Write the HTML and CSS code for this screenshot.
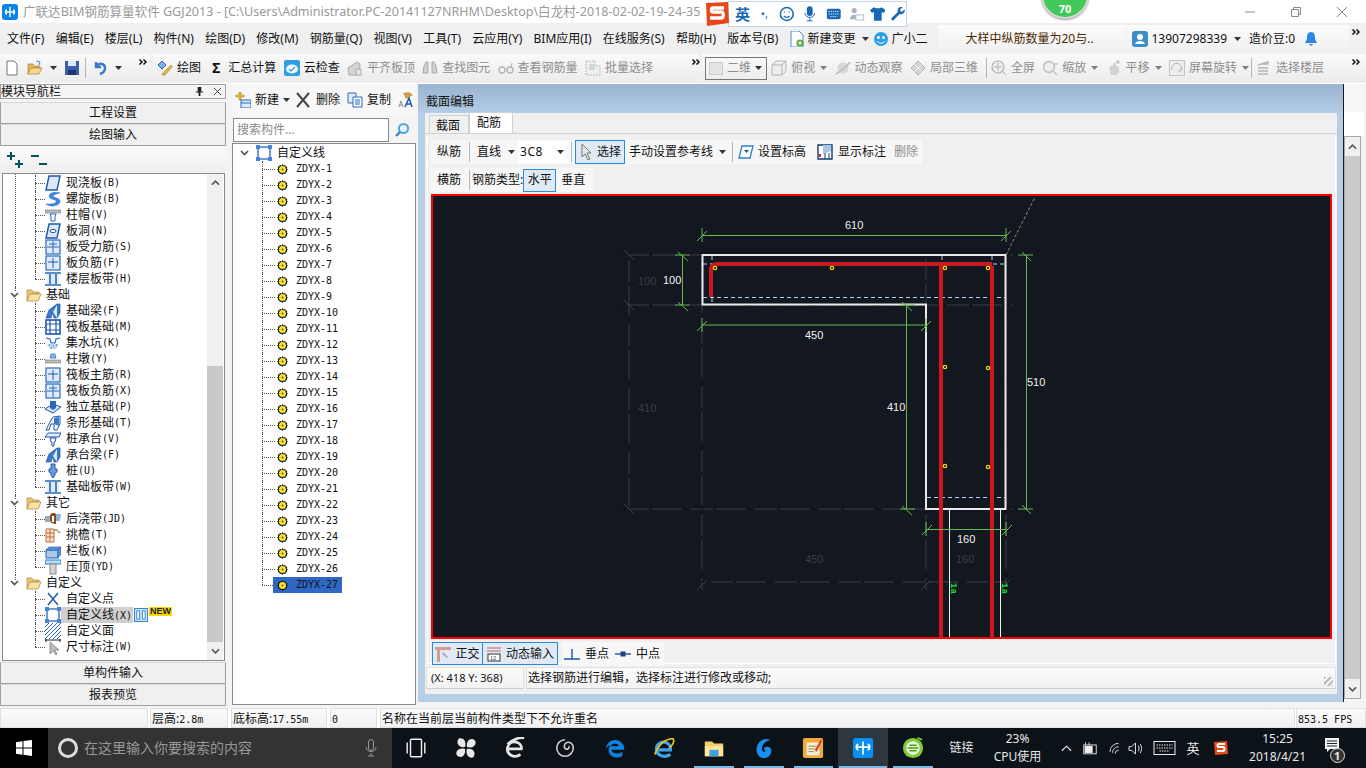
FILE: index.html
```html
<!DOCTYPE html>
<html lang="zh-CN">

<head>
    <meta charset="UTF-8">
    <title>广联达BIM钢筋算量软件 GGJ2013</title>
    <link rel="stylesheet" href="styles.css">
</head>

<body>

    <!-- icon sprite -->
    <svg class="sprite" width="0" height="0">
        <defs>
            <symbol id="i-folder" viewBox="0 0 16 16"><path d="M1 3h5l1 2h6v2H5l-3 7H1z" fill="#e9c877" stroke="#a98a3c" stroke-width=".7"/><path d="M4 7h11l-3 7H1z" fill="#f7e3a3" stroke="#a98a3c" stroke-width=".7"/></symbol>
            <symbol id="i-slab" viewBox="0 0 16 16"><path d="M4 1h11l-3 14H1z" fill="#dbe9f8" stroke="#1f56ad" stroke-width="1.4"/></symbol>
            <symbol id="i-spiral" viewBox="0 0 16 16"><path d="M15 2C8 0 2 3 5 7c2 2 7 1 6 4-1 2-6 2-10 2 4 3 12 3 14-2 1-4-6-4-7-6 0-1 3-2 7-3z" fill="#3f86dc" stroke="#2e6fc4" stroke-width=".5"/></symbol>
            <symbol id="i-cap" viewBox="0 0 16 16"><path d="M0 3h16v3H0z" fill="#b9b9b9" stroke="#777" stroke-width=".6"/><path d="M5 7h6l-1 3v4H6v-4z" fill="#fff" stroke="#2a68bd"/></symbol>
            <symbol id="i-hole" viewBox="0 0 16 16"><path d="M4 1h11l-3 14H1z" fill="#dbe9f8" stroke="#1f56ad" stroke-width="1.4"/><ellipse cx="8" cy="8" rx="3" ry="1.6" fill="#fff" stroke="#1f56ad"/></symbol>
            <symbol id="i-grid" viewBox="0 0 16 16"><rect x="1" y="1" width="14" height="14" fill="#dfeafa" stroke="#2a68bd" stroke-width="1.2"/><path d="M8 2v12M2 8h12M4 5h8" stroke="#2a68bd" fill="none"/></symbol>
            <symbol id="i-band" viewBox="0 0 16 16"><path d="M2 3h12v10H2z" fill="#cfe0f5" opacity=".6"/><path d="M0 2h16M0 14h16" stroke="#2a68bd" stroke-width="1.4"/><path d="M5 3v10M11 3v10" stroke="#2a68bd" stroke-width="1.6"/></symbol>
            <symbol id="i-beam" viewBox="0 0 16 16"><path d="M1 15l3-8 8-6h3v9l-3 5H9l-1-6-2 6z" fill="#3a78c9" stroke="#1f56ad" stroke-width=".7"/><path d="M8 9l4-7v13z" fill="#dfeafa"/></symbol>
            <symbol id="i-raft" viewBox="0 0 16 16"><rect x="1" y="1" width="14" height="14" fill="#fff" stroke="#1f56ad" stroke-width="1.6"/><path d="M5 1v14M11 1v14M1 5h14M1 11h14" stroke="#1f56ad" stroke-width="1.2"/></symbol>
            <symbol id="i-pit" viewBox="0 0 16 16"><path d="M1 3l4 1 1 4h4l1-4 4-1" fill="none" stroke="#2a68bd" stroke-width="1.2"/><path d="M2 9l3 5h6l3-5z" fill="#bcd4f0"/><path d="M4 10h1M8 11h1M11 10h1M6 13h1" stroke="#2a68bd"/></symbol>
            <symbol id="i-pier" viewBox="0 0 16 16"><path d="M6 3h4l1 4H5z" fill="#8fb4e4" stroke="#2a68bd" stroke-width=".7"/><path d="M0 9h16v3H0z" fill="#bdbdbd" stroke="#777" stroke-width=".6"/></symbol>
            <symbol id="i-main" viewBox="0 0 16 16"><rect x="1" y="1" width="14" height="14" fill="#dfeafa" stroke="#2a68bd" stroke-width="1.2"/><path d="M8 3v10M3 7h10" stroke="#1f56ad"/></symbol>
            <symbol id="i-iso" viewBox="0 0 16 16"><path d="M0 10l8-5 8 3-8 6z" fill="#d9e6f7" stroke="#1f56ad"/><path d="M5 2h6v7l-3 2-3-2z" fill="#2a68bd"/></symbol>
            <symbol id="i-strip" viewBox="0 0 16 16"><path d="M1 15l3-6 4-7 7-1v8l-3 6H9V9H6l-2 6z" fill="#fff" stroke="#1f56ad"/><path d="M9 3l5-1v9l-5-2z" fill="#3a78c9"/></symbol>
            <symbol id="i-cushion" viewBox="0 0 16 16"><path d="M0 6l3-4h13l-2 4z" fill="#dfeafa" stroke="#1f56ad"/><path d="M5 7h6l-1 4H9v4H7v-4H6z" fill="#fff" stroke="#1f56ad"/></symbol>
            <symbol id="i-pile" viewBox="0 0 16 16"><path d="M6 1h4v5h2v3l-2 1v2l-2 3-2-3v-2L4 9V6h2z" fill="#6d9bdb" stroke="#1f56ad"/></symbol>
            <symbol id="i-post" viewBox="0 0 16 16"><rect x="0" y="5" width="5" height="6" fill="#9ab"/><path d="M5 4c2-3 5-2 6-1v10c-3 0-5-1-6-3z" fill="#8a4a22"/><path d="M11 3h5l-1 7h-4z" fill="#8fb4e4"/><path d="M7 5h2v6H7z" fill="#fff"/></symbol>
            <symbol id="i-eave" viewBox="0 0 16 16"><path d="M1 2h8v13H1z" fill="#fbe4cd" stroke="#c06a33"/><path d="M1 6h8M1 10h8M5 2v13" stroke="#c06a33"/><path d="M9 2h3l4 4h-3l-1-2H9z" fill="#b8a88e"/></symbol>
            <symbol id="i-rail" viewBox="0 0 16 16"><path d="M1 7h12v8H1z" fill="#a9c9ec" stroke="#1f56ad"/><path d="M1 7l3-3h12l-3 3zM13 7l3-3v7l-3 4z" fill="#5e93d8" stroke="#1f56ad" stroke-width=".6"/></symbol>
            <symbol id="i-coping" viewBox="0 0 16 16"><rect x="0" y="1" width="16" height="4" fill="#bcdcf8" stroke="#2a7fd0"/><rect x="5" y="5" width="6" height="10" fill="#d4d4d4" stroke="#888"/></symbol>
            <symbol id="i-point" viewBox="0 0 16 16"><path d="M3 2l10 12M13 2L3 14" stroke="#1f56ad" stroke-width="1.4"/></symbol>
            <symbol id="i-line" viewBox="0 0 16 16"><rect x="2" y="2" width="12" height="12" fill="none" stroke="#1f56ad" stroke-width="1.2"/><path d="M0 0h4v4H0zM12 0h4v4h-4zM0 12h4v4H0zM12 12h4v4h-4z" fill="#3f86dc"/></symbol>
            <symbol id="i-hatch" viewBox="0 0 16 16"><path d="M0 4l4-4M0 8l8-8M0 12L12 0M0 16L16 0M4 16L16 4M8 16l8-8M12 16l4-4" stroke="#2a68bd"/></symbol>
            <symbol id="i-dim" viewBox="0 0 16 16"><path d="M0 1h16M1 0v3M15 0v3" stroke="#222"/><path d="M5 3v12l3-3 3 4 1-1-2-4h4z" fill="#bbb" stroke="#777" stroke-width=".7"/></symbol>
            <symbol id="i-gear" viewBox="0 0 12 12"><path d="M6 0l1 1.5L9 1l.5 1.7 1.7.5-.5 2L12 6l-1.3 1 .5 1.8-1.7.5L9 11l-2-.5L6 12l-1-1.5L3 11l-.5-1.7-1.7-.5.5-1.800L0 6l1.300-1-.5-2 1.700-.5L3 1l2 .5z" fill="#1a1a1a"/><circle cx="6" cy="6" r="3.800" fill="#f6e32a"/><circle cx="6" cy="6" r="1" fill="#5a5200"/></symbol>
            <symbol id="i-caret" viewBox="0 0 7 4"><path d="M0 0h7L3.500 4z" fill="#333"/></symbol>
            <symbol id="i-chev" viewBox="0 0 8 6"><path d="M.5 .5L3 3 .5 5.500M4.500 .5L7 3 4.500 5.500" fill="none" stroke="#111" stroke-width="1.500"/></symbol>
            <symbol id="i-fold" viewBox="0 0 9 6"><path d="M1 1l3.500 3.500L8 1" fill="none" stroke="#555" stroke-width="1.700"/></symbol>
        </defs>
    </svg>

    <!-- title bar -->
    <div class="titlebar">
        <svg class="app-logo" viewBox="0 0 16 16"><rect width="16" height="16" rx="3" fill="#0d83e8"/><path d="M8 3v10M8 8H3M8 8h5M5 6c-2 0-2 4 0 4M11 6c2 0 2 4 0 4" stroke="#fff" stroke-width="1.400" fill="none"/></svg>
        <span class="title-text">广联达BIM钢筋算量软件 GGJ2013 - [C:\Users\Administrator.PC-20141127NRHM\Desktop\白龙村-2018-02-02-19-24-35</span>
        <div class="win-btns">
            <svg viewBox="0 0 10 10"><path d="M0 5h10" stroke="#888"/></svg>
            <svg viewBox="0 0 10 10"><path d="M.5 2.500h7v7h-7zM2.500 2.500v-2h7v7h-2" fill="none" stroke="#888"/></svg>
            <svg viewBox="0 0 10 10"><path d="M0 0l10 10M10 0L0 10" stroke="#888"/></svg>
        </div>
    </div>

    <!-- sogou bar, sits over the title -->
    <div class="ime">
        <svg class="ime-s" viewBox="0 0 28 28"><path d="M3 3l22-1 1 21-22 3z" fill="#e8471a"/><path d="M21 8H10c-2 0-2 4 0 4h8c3 0 3 6 0 6H7" fill="none" stroke="#fff" stroke-width="3.400"/></svg>
        <div class="ime-box">
            <b>英</b>
            <span class="ime-dot">•,</span>
            <svg viewBox="0 0 16 16"><circle cx="8" cy="8" r="6.600" fill="none" stroke="#1769b8" stroke-width="1.600"/><path d="M5 6h1M10 6h1M5 10c2 2 4 2 6 0" stroke="#1769b8" stroke-width="1.300" fill="none"/></svg>
            <svg viewBox="0 0 16 16"><rect x="5" y="0" width="6" height="10" rx="3" fill="#1769b8"/><path d="M3 7c0 6 10 6 10 0M8 12v3M5 15h6" stroke="#1769b8" fill="none"/></svg>
            <svg viewBox="0 0 18 16"><rect x="1" y="2" width="16" height="12" rx="2" fill="#1769b8"/><path d="M3 5h12M3 8h12M5 11h8" stroke="#fff" stroke-dasharray="1.500 1"/></svg>
            <svg viewBox="0 0 18 16"><circle cx="6" cy="4" r="3" fill="#a9b6c4"/><path d="M1 14c0-7 10-7 10 0z" fill="#a9b6c4"/><rect x="8" y="9" width="9" height="6" fill="#fff" stroke="#a9b6c4"/></svg>
            <svg class="ime-shirt" viewBox="0 0 16 16"><path d="M4 1L0 4l2 3 2-1v9h8V6l2 1 2-3-4-3-2 1H6z" fill="#1769b8"/></svg>
            <svg class="ime-wrench" viewBox="0 0 16 16"><path d="M15 3l-3 3-2-2 3-3c-3-1-6 1-5 5L1 13l2 2 7-7c3 1 6-2 5-5z" fill="#1769b8"/></svg>
        </div>
    </div>

    <!-- green score ball -->
    <div class="score"><span>70</span></div>

    <!-- menu -->
    <div class="menubar">
        <span class="menu-item">文件(F)</span>
        <span class="menu-item">编辑(E)</span>
        <span class="menu-item">楼层(L)</span>
        <span class="menu-item">构件(N)</span>
        <span class="menu-item">绘图(D)</span>
        <span class="menu-item">修改(M)</span>
        <span class="menu-item">钢筋量(Q)</span>
        <span class="menu-item">视图(V)</span>
        <span class="menu-item">工具(T)</span>
        <span class="menu-item">云应用(Y)</span>
        <span class="menu-item">BIM应用(I)</span>
        <span class="menu-item">在线服务(S)</span>
        <span class="menu-item">帮助(H)</span>
        <span class="menu-item">版本号(B)</span>
        <div class="menu-change">
            <svg class="ic" viewBox="0 0 16 16"><path d="M2 0h8l4 4v12H2z" fill="#fff" stroke="#3a8ee0"/><circle cx="11" cy="12" r="3.600" fill="#5aa832"/><path d="M9 12h4M11 10v4" stroke="#fff"/></svg>
            <span>新建变更</span>
            <svg class="caret"><use href="#i-caret"/></svg>
            <svg class="ic bot" viewBox="0 0 16 16"><circle cx="8" cy="8" r="7" fill="#2ba0e6"/><circle cx="5.500" cy="6.500" r="1.500" fill="#fff"/><circle cx="10.500" cy="6.500" r="1.500" fill="#fff"/><path d="M4 10c2 3 6 3 8 0" stroke="#fff" fill="none"/></svg>
            <span>广小二</span>
        </div>
        <div class="menu-notice">大样中纵筋数量为20与..</div>
        <div class="menu-user">
            <svg class="ic" viewBox="0 0 16 16"><rect width="16" height="16" rx="3" fill="#3c8ec8"/><circle cx="8" cy="6" r="3" fill="#fff"/><path d="M3 13c1-4 9-4 10 0z" fill="#fff"/></svg>
            <span class="user-phone">13907298339</span>
            <svg class="caret"><use href="#i-caret"/></svg>
            <span class="user-bean">造价豆:0</span>
            <svg class="ic bell" viewBox="0 0 16 16"><path d="M8 1c-4 0-4 4-4 7l-2 4h12l-2-4c0-3 0-7-4-7z" fill="#2b86e6"/><path d="M6 13c1 2 3 2 4 0z" fill="#2b86e6"/></svg>
        </div>
        <svg class="chev"><use href="#i-chev"/></svg>
    </div>

    <!-- main toolbar -->
    <div class="toolbar">
        <div class="band band-file">
            <svg class="ic" viewBox="0 0 16 16"><path d="M3 1h7l3 3v11H3z" fill="#fff" stroke="#777"/></svg>
            <svg class="ic" viewBox="0 0 16 16"><path d="M1 4h5l1 2h6v2H5l-3 6H1z" fill="#e2b85c" stroke="#a98a3c" stroke-width=".7"/><path d="M4 8h11l-3 6H1z" fill="#f7d88a" stroke="#a98a3c" stroke-width=".7"/><path d="M9 1l4 1-1 3" stroke="#3a8ee0" fill="none"/></svg>
            <svg class="caret"><use href="#i-caret"/></svg>
            <svg class="ic" viewBox="0 0 16 16"><path d="M1 1h14v14H1z" fill="#3c5ea8"/><path d="M4 1h8v5H4z" fill="#dfe8f5"/><path d="M4 10h8v5H4z" fill="#1f3570"/></svg>
            <i class="sep"></i>
            <svg class="ic" viewBox="0 0 16 16"><path d="M4 2v5h5M4 6c4-4 9-2 9 2 0 3-2 5-5 6" fill="none" stroke="#3a78d0" stroke-width="2.400"/></svg>
            <svg class="caret"><use href="#i-caret"/></svg>
            <svg class="chev"><use href="#i-chev"/></svg>
        </div>
        <div class="band band-main">
            <div class="tool"><svg class="ic" viewBox="0 0 16 16"><path d="M1 5l4-4 4 4-4 4z" fill="#7fb0e6" stroke="#2a68bd"/><path d="M6 13l8-8 1 2-7 8H5z" fill="#e8b547" stroke="#96701e" stroke-width=".6"/></svg>绘图</div>
            <div class="tool"><span class="sigma">Σ</span>汇总计算</div>
            <div class="tool"><svg class="ic" viewBox="0 0 16 16"><rect width="16" height="16" rx="2" fill="#2f9fe2"/><ellipse cx="8" cy="9" rx="6" ry="4.400" fill="#fff"/><path d="M5 9l2 2 4-4" stroke="#2f9fe2" stroke-width="1.400" fill="none"/></svg>云检查</div>
            <div class="tool off"><svg class="ic" viewBox="0 0 16 16"><path d="M1 8l9-6 3 2-1 11H2z" fill="#d3d3d3" stroke="#aaa"/><path d="M9 9h5v6H9z" fill="#e5e5e5" stroke="#aaa"/></svg>平齐板顶</div>
            <div class="tool off"><svg class="ic" viewBox="0 0 16 16"><path d="M2 6l2-4h2v11H1zM14 6l-2-4h-2v11h5z" fill="#cfcfcf" stroke="#aaa"/></svg>查找图元</div>
            <div class="tool off"><svg class="ic" viewBox="0 0 16 16"><circle cx="4" cy="10" r="3" fill="none" stroke="#b5b5b5" stroke-width="1.400"/><circle cx="12" cy="10" r="3" fill="none" stroke="#b5b5b5" stroke-width="1.400"/><path d="M13 7l1-4" stroke="#b5b5b5"/></svg>查看钢筋量</div>
            <div class="tool off"><svg class="ic" viewBox="0 0 16 16"><path d="M1 1h9v5h5v9H1z" fill="#eee" stroke="#bbb" stroke-dasharray="2 1"/><path d="M4 4h6v6H4z" fill="#d5d5d5"/></svg>批量选择</div>
            <svg class="chev"><use href="#i-chev"/></svg>
        </div>
        <div class="band band-view">
            <div class="view-combo"><i></i><span>二维</span><svg class="caret"><use href="#i-caret"/></svg></div>
            <div class="tool off"><svg class="ic" viewBox="0 0 16 16"><path d="M1 5l4-4h10v10l-4 4H1z" fill="#eee" stroke="#b5b5b5"/><path d="M1 5h10v10M11 5l4-4" fill="none" stroke="#b5b5b5"/></svg>俯视<svg class="caret"><use href="#i-caret"/></svg></div>
            <div class="tool off"><svg class="ic" viewBox="0 0 16 16"><circle cx="8" cy="8" r="5.600" fill="#d8d8d8"/><path d="M1 14C5 12 12 6 15 2" stroke="#bbb" stroke-width="1.600" fill="none"/></svg>动态观察</div>
            <div class="tool off"><svg class="ic" viewBox="0 0 16 16"><path d="M1 8l7-7 7 7-7 7z" fill="#d4d4d4" stroke="#b0b0b0"/><path d="M4.500 4.500l7 7M11.500 4.500l-7 7" stroke="#eee"/></svg>局部三维</div>
            <i class="sep"></i>
            <div class="tool off"><svg class="ic" viewBox="0 0 16 16"><circle cx="7" cy="7" r="6" fill="#eee" stroke="#b5b5b5" stroke-width="1.200"/><path d="M3 7h8M7 3v8M11 11l4 4" stroke="#b5b5b5"/></svg>全屏</div>
            <div class="tool off"><svg class="ic" viewBox="0 0 16 16"><circle cx="7" cy="7" r="5.400" fill="#eee" stroke="#c2c2c2" stroke-width="1.600"/><path d="M11 11l4 4M13 4h3" stroke="#c2c2c2" stroke-width="1.400"/></svg>缩放<svg class="caret"><use href="#i-caret"/></svg></div>
            <div class="tool off"><svg class="ic" viewBox="0 0 16 16"><path d="M3 7l4-2V3h3v3l3 1v5l-2 3H5z" fill="#d2d2d2"/><path d="M12 0v4M10 2h4" stroke="#b5b5b5"/></svg>平移<svg class="caret"><use href="#i-caret"/></svg></div>
            <div class="tool off"><svg class="ic" viewBox="0 0 16 16"><rect x=".5" y=".5" width="15" height="15" fill="#eee" stroke="#c5c5c5"/><path d="M3 10a5 5 0 1 1 9 1M12 8v3H9" fill="none" stroke="#b5b5b5"/></svg>屏幕旋转<svg class="caret"><use href="#i-caret"/></svg></div>
            <i class="sep sep-tight"></i>
            <div class="tool off"><svg class="ic" viewBox="0 0 16 16"><path d="M2 5l10-3v2H5M2 8h10M2 11h10M2 14h10" stroke="#b5b5b5" stroke-width="1.400" fill="none"/></svg>选择楼层</div>
            <svg class="chev"><use href="#i-chev"/></svg>
        </div>
    </div>

    <div class="workspace">

        <!-- module nav -->
        <aside class="nav">
            <div class="nav-head">
                <span>模块导航栏</span>
                <svg class="pin" viewBox="0 0 10 10"><path d="M3 0h4v5h2v1H6v4H4V6H1V5h2z" fill="#222"/></svg>
                <svg class="cross" viewBox="0 0 10 10"><path d="M1 1l8 8M9 1L1 9" stroke="#333"/></svg>
            </div>
            <div class="nav-btn">工程设置</div>
            <div class="nav-btn">绘图输入</div>
            <div class="nav-tools">
                <svg viewBox="0 0 17 16"><path d="M0 4h8M4 0v8M8 12h8M12 8v8" stroke="#00555c" stroke-width="2"/></svg>
                <svg viewBox="0 0 17 16"><path d="M0 4h8M8 12h8" stroke="#00555c" stroke-width="2"/></svg>
            </div>
            <div class="tree-box">
                <div class="tree-list">
                    <div class="group nosign">
                        <div class="leaf"><svg class="ico"><use href="#i-slab"/></svg>现浇板<tt>(B)</tt></div>
                        <div class="leaf"><svg class="ico"><use href="#i-spiral"/></svg>螺旋板<tt>(B)</tt></div>
                        <div class="leaf"><svg class="ico"><use href="#i-cap"/></svg>柱帽<tt>(V)</tt></div>
                        <div class="leaf"><svg class="ico"><use href="#i-hole"/></svg>板洞<tt>(N)</tt></div>
                        <div class="leaf"><svg class="ico"><use href="#i-grid"/></svg>板受力筋<tt>(S)</tt></div>
                        <div class="leaf"><svg class="ico"><use href="#i-main"/></svg>板负筋<tt>(F)</tt></div>
                        <div class="leaf"><svg class="ico"><use href="#i-band"/></svg>楼层板带<tt>(H)</tt></div>
                    </div>
                    <div class="group">
                        <div class="folder"><svg class="fold"><use href="#i-fold"/></svg><svg class="ico"><use href="#i-folder"/></svg>基础</div>
                        <div class="leaf"><svg class="ico"><use href="#i-beam"/></svg>基础梁<tt>(F)</tt></div>
                        <div class="leaf"><svg class="ico"><use href="#i-raft"/></svg>筏板基础<tt>(M)</tt></div>
                        <div class="leaf"><svg class="ico"><use href="#i-pit"/></svg>集水坑<tt>(K)</tt></div>
                        <div class="leaf"><svg class="ico"><use href="#i-pier"/></svg>柱墩<tt>(Y)</tt></div>
                        <div class="leaf"><svg class="ico"><use href="#i-main"/></svg>筏板主筋<tt>(R)</tt></div>
                        <div class="leaf"><svg class="ico"><use href="#i-grid"/></svg>筏板负筋<tt>(X)</tt></div>
                        <div class="leaf"><svg class="ico"><use href="#i-iso"/></svg>独立基础<tt>(P)</tt></div>
                        <div class="leaf"><svg class="ico"><use href="#i-strip"/></svg>条形基础<tt>(T)</tt></div>
                        <div class="leaf"><svg class="ico"><use href="#i-cushion"/></svg>桩承台<tt>(V)</tt></div>
                        <div class="leaf"><svg class="ico"><use href="#i-beam"/></svg>承台梁<tt>(F)</tt></div>
                        <div class="leaf"><svg class="ico"><use href="#i-pile"/></svg>桩<tt>(U)</tt></div>
                        <div class="leaf"><svg class="ico"><use href="#i-band"/></svg>基础板带<tt>(W)</tt></div>
                    </div>
                    <div class="group">
                        <div class="folder"><svg class="fold"><use href="#i-fold"/></svg><svg class="ico"><use href="#i-folder"/></svg>其它</div>
                        <div class="leaf"><svg class="ico"><use href="#i-post"/></svg>后浇带<tt>(JD)</tt></div>
                        <div class="leaf"><svg class="ico"><use href="#i-eave"/></svg>挑檐<tt>(T)</tt></div>
                        <div class="leaf"><svg class="ico"><use href="#i-rail"/></svg>栏板<tt>(K)</tt></div>
                        <div class="leaf"><svg class="ico"><use href="#i-coping"/></svg>压顶<tt>(YD)</tt></div>
                    </div>
                    <div class="group last">
                        <div class="folder"><svg class="fold"><use href="#i-fold"/></svg><svg class="ico"><use href="#i-folder"/></svg>自定义</div>
                        <div class="leaf"><svg class="ico"><use href="#i-point"/></svg>自定义点</div>
                        <div class="leaf sel"><svg class="ico"><use href="#i-line"/></svg><span class="sel-text">自定义线<tt>(X)</tt></span>
                            <svg class="ico-new" viewBox="0 0 15 15"><rect x=".5" y=".5" width="14" height="14" fill="#cfe4fa" stroke="#2a7fd0"/><path d="M3 3h3v9H3zM9 3h3v9H9z" fill="#fff" stroke="#2a7fd0"/></svg>
                            <span class="new-tag">NEW</span>
                        </div>
                        <div class="leaf"><svg class="ico"><use href="#i-hatch"/></svg>自定义面</div>
                        <div class="leaf"><svg class="ico"><use href="#i-dim"/></svg>尺寸标注<tt>(W)</tt></div>
                    </div>
                </div>
                <div class="scroll">
                    <svg viewBox="0 0 10 6"><path d="M1 5l4-4 4 4" fill="none" stroke="#555" stroke-width="1.800"/></svg>
                    <div class="scroll-track"><div class="scroll-thumb"></div></div>
                    <svg viewBox="0 0 10 6"><path d="M1 1l4 4 4-4" fill="none" stroke="#555" stroke-width="1.800"/></svg>
                </div>
            </div>
            <div class="nav-btn">单构件输入</div>
            <div class="nav-btn">报表预览</div>
        </aside>

        <!-- component tree -->
        <section class="parts">
            <div class="parts-tools">
                <svg class="ic" viewBox="0 0 16 16"><path d="M1 3h3V0h2v3h3v2H6v3H4V5H1z" fill="#e8b82e" stroke="#a27d16" stroke-width=".5"/><rect x="6" y="8" width="10" height="8" fill="#dfeafa" stroke="#2a68bd"/><path d="M6 11h10" stroke="#2a68bd"/></svg>
                <span>新建</span><svg class="caret"><use href="#i-caret"/></svg>
                <svg class="ic del" viewBox="0 0 16 16"><path d="M2 1l12 14M14 1L2 15" stroke="#444" stroke-width="2"/></svg>
                <span>删除</span>
                <svg class="ic" viewBox="0 0 16 16"><path d="M1 1h8v10H1z" fill="#dfeafa" stroke="#2a68bd"/><path d="M6 5h9v10H6z" fill="#fff" stroke="#2a68bd"/><path d="M8 8h5M8 10h5M8 12h5" stroke="#2a68bd"/></svg>
                <span>复制</span>
                <svg class="ic" viewBox="0 0 16 16"><path d="M5 1l6-1 4 3-7 4z" fill="#c9a23f"/><path d="M1 15l2-6 2 6M2 13h2" fill="none" stroke="#777" stroke-width=".8"/><path d="M7 15l4-9 3 9M9 12h4" fill="none" stroke="#1f56ad" stroke-width="1.500"/></svg>
            </div>
            <div class="parts-search">
                <div class="search-input">搜索构件...</div>
                <svg viewBox="0 0 16 16"><circle cx="9.500" cy="6.500" r="4.600" fill="#eaf4fb" stroke="#55a3dc" stroke-width="2"/><path d="M6 10l-4 4" stroke="#3c85c4" stroke-width="2.400"/></svg>
            </div>
            <div class="parts-tree">
                <div class="folder root"><svg class="fold"><use href="#i-fold"/></svg><svg class="ico"><use href="#i-line"/></svg>自定义线</div>
                <div class="zd-list">
                    <div class="zd"><svg class="ico-g"><use href="#i-gear"/></svg>ZDYX-1</div>
                    <div class="zd"><svg class="ico-g"><use href="#i-gear"/></svg>ZDYX-2</div>
                    <div class="zd"><svg class="ico-g"><use href="#i-gear"/></svg>ZDYX-3</div>
                    <div class="zd"><svg class="ico-g"><use href="#i-gear"/></svg>ZDYX-4</div>
                    <div class="zd"><svg class="ico-g"><use href="#i-gear"/></svg>ZDYX-5</div>
                    <div class="zd"><svg class="ico-g"><use href="#i-gear"/></svg>ZDYX-6</div>
                    <div class="zd"><svg class="ico-g"><use href="#i-gear"/></svg>ZDYX-7</div>
                    <div class="zd"><svg class="ico-g"><use href="#i-gear"/></svg>ZDYX-8</div>
                    <div class="zd"><svg class="ico-g"><use href="#i-gear"/></svg>ZDYX-9</div>
                    <div class="zd"><svg class="ico-g"><use href="#i-gear"/></svg>ZDYX-10</div>
                    <div class="zd"><svg class="ico-g"><use href="#i-gear"/></svg>ZDYX-11</div>
                    <div class="zd"><svg class="ico-g"><use href="#i-gear"/></svg>ZDYX-12</div>
                    <div class="zd"><svg class="ico-g"><use href="#i-gear"/></svg>ZDYX-13</div>
                    <div class="zd"><svg class="ico-g"><use href="#i-gear"/></svg>ZDYX-14</div>
                    <div class="zd"><svg class="ico-g"><use href="#i-gear"/></svg>ZDYX-15</div>
                    <div class="zd"><svg class="ico-g"><use href="#i-gear"/></svg>ZDYX-16</div>
                    <div class="zd"><svg class="ico-g"><use href="#i-gear"/></svg>ZDYX-17</div>
                    <div class="zd"><svg class="ico-g"><use href="#i-gear"/></svg>ZDYX-18</div>
                    <div class="zd"><svg class="ico-g"><use href="#i-gear"/></svg>ZDYX-19</div>
                    <div class="zd"><svg class="ico-g"><use href="#i-gear"/></svg>ZDYX-20</div>
                    <div class="zd"><svg class="ico-g"><use href="#i-gear"/></svg>ZDYX-21</div>
                    <div class="zd"><svg class="ico-g"><use href="#i-gear"/></svg>ZDYX-22</div>
                    <div class="zd"><svg class="ico-g"><use href="#i-gear"/></svg>ZDYX-23</div>
                    <div class="zd"><svg class="ico-g"><use href="#i-gear"/></svg>ZDYX-24</div>
                    <div class="zd"><svg class="ico-g"><use href="#i-gear"/></svg>ZDYX-25</div>
                    <div class="zd"><svg class="ico-g"><use href="#i-gear"/></svg>ZDYX-26</div>
                    <div class="zd current"><span class="zd-sel"><svg class="ico-g"><use href="#i-gear"/></svg>ZDYX-27</span></div>
                </div>
            </div>
        </section>

        <!-- section editor window -->
        <section class="editor">
            <div class="editor-title">截面编辑</div>
            <div class="editor-body">
                <div class="tabs">
                    <span class="tab">截面</span>
                    <span class="tab active">配筋</span>
                </div>
                <div class="tab-page">
                    <div class="ed-row">
                        <div class="ed-band">
                            <span class="ed-t">纵筋</span><i class="sep sep-a"></i>
                            <span class="ed-t ml-7">直线</span><svg class="caret ml-7"><use href="#i-caret"/></svg>
                            <div class="rebar-input"><span>3C8</span><svg class="caret"><use href="#i-caret"/></svg></div>
                            <i class="sep sep-b"></i>
                            <div class="ed-btn on select-btn"><svg class="ic" viewBox="0 0 16 16"><path d="M3 0v13l3-3 3 6 2-1-3-6h4z" fill="#e5e5e5" stroke="#777"/></svg>选择</div>
                            <span class="ed-t ml-4">手动设置参考线</span><svg class="caret ml-6"><use href="#i-caret"/></svg>
                            <i class="sep sep-c"></i>
                            <span class="ed-t ed-ic ml-5"><svg class="ic" viewBox="0 0 16 16"><path d="M4 2h11l-3 12H1z" fill="#fff" stroke="#2a7fd0" stroke-width="1.300"/><path d="M6 6h5l-2.500 3z" fill="#1f56ad"/></svg>设置标高</span>
                            <span class="ed-t ed-ic ml-11"><svg class="ic" viewBox="0 0 16 16"><path d="M1 1h14v14H1z" fill="#fff" stroke="#123a70" stroke-width="1.400"/><path d="M6 1l8 0v6l-8 3z" fill="#a9c6e8"/><path d="M3 13v-3" stroke="#d03020" stroke-width="2"/><path d="M8 15V9M12 15V9" stroke="#123a70"/></svg>显示标注</span>
                            <span class="ed-t off">删除</span>
                        </div>
                    </div>
                    <div class="ed-row">
                        <div class="ed-band second">
                            <span class="ed-t">横筋</span><i class="sep sep-a"></i>
                            <span class="rebar-type">钢筋类型:</span>
                            <div class="ed-btn on">水平</div>
                            <span class="ed-t ml-5">垂直</span>
                        </div>
                    </div>

                    <!-- cad canvas, coords are screen px -->
                    <svg class="cad" viewBox="431 194 901 445">
                        <rect x="431" y="194" width="901" height="445" fill="#13171f"/>

                        <g class="guide">
                            <path d="M618 255H1013M618 305H1013M618 509H1013M702 582H1006M629 251V513M702 249V590M926 249V590M1006 249V585"/>
                        </g>
                        <g class="guide-dash">
                            <path d="M618 255H1013M618 305H1013M618 509H1013M702 582H1006M629 251V513M702 249V590M926 249V590M1006 249V585"/>
                        </g>
                        <path class="guide" d="M624 250l10 10M624 300l10 10M624 504l10 10M697 590l10-10M921 590l10-10M1001 589l10-10"/>
                        <path class="ray" d="M1006 255L1035 197"/>

                        <g class="ref-dash">
                            <path d="M703 297.500H1005M703 264H712M993 264H1005M712 256V304M992 256V262M942 256V262M927 497.500H1005"/>
                        </g>

                        <path class="outline" d="M702.500 255H1005.500V509H926V304.500H702.500Z"/>
                        <path class="stirrup" d="M949.500 510V637M1000.500 510V637"/>

                        <path class="bar" d="M711 297V270Q711 264 717 264H992"/>
                        <path class="bar" d="M941 266V637M992 266V637"/>

                        <g class="node">
                            <circle cx="715" cy="268" r="1.700"/><circle cx="832" cy="268" r="1.700"/><circle cx="945" cy="268" r="1.700"/><circle cx="988" cy="268" r="1.700"/>
                            <circle cx="945" cy="367" r="1.700"/><circle cx="988" cy="368" r="1.700"/><circle cx="945" cy="466" r="1.700"/><circle cx="988" cy="467" r="1.700"/>
                        </g>

                        <g class="dim">
                            <path d="M702 235.500H1006M702 228V242M1006 228V242M697 241l10-10M1001 241l10-10"/>
                            <path d="M682.500 255V305M675 255H690M675 305H690M678 252l10 9M678 302l10 9"/>
                            <path d="M702 325H926M702 318V332M926 318V332M697 331l10-10M921 331l10-10"/>
                            <path d="M906.500 305V509M900 305H915M900 509H915M902 302l10 9M902 506l10 9"/>
                            <path d="M1026.500 255V509M1018 255H1033M1018 509H1033M1022 252l9 9M1022 505l9 9"/>
                            <path d="M926 529.500H1006M926 522V536M1006 522V536M922 535l10-10M1002 535l10-10"/>
                        </g>

                        <g class="ghost-label">
                            <text x="638" y="285">100</text>
                            <text x="638" y="412">410</text>
                            <text x="805" y="563">450</text>
                            <text x="956" y="563">160</text>
                        </g>
                        <g class="dim-label">
                            <text x="845" y="229">610</text>
                            <text x="663" y="284">100</text>
                            <text x="805" y="339">450</text>
                            <text x="887" y="411">410</text>
                            <text x="1027" y="386">510</text>
                            <text x="957" y="543">160</text>
                        </g>
                        <g class="axis-label">
                            <text transform="translate(951 583) rotate(90)">1a</text>
                            <text transform="translate(1002 583) rotate(90)">1a</text>
                        </g>
                    </svg>

                    <div class="snap-row">
                        <div class="ed-btn on snap"><svg class="ic" viewBox="0 0 16 16"><path d="M0 1h16v3H5v12H2V4H0z" fill="#d79a92"/><path d="M8 6l5 5-1 1-5-4z" fill="#aaa"/></svg>正交</div>
                        <div class="ed-btn on snap wide"><svg class="ic" viewBox="0 0 16 16"><path d="M1 2h14M1 5h14" stroke="#c0605a"/><rect x="2" y="8" width="12" height="7" fill="#fff" stroke="#333"/><text x="4" y="14" class="ic-n">12</text></svg>动态输入</div>
                        <div class="snap-band">
                            <span class="ed-ic"><svg class="ic" viewBox="0 0 16 16"><path d="M0 13h16M8 3v10" stroke="#1f56ad" stroke-width="1.400"/></svg>垂点</span>
                            <span class="ed-ic"><svg class="ic" viewBox="0 0 16 16"><path d="M0 8h16" stroke="#1f56ad" stroke-width="1.400"/><rect x="5.500" y="5.500" width="5" height="5" fill="#1f3c88"/></svg>中点</span>
                        </div>
                    </div>
                </div>
                <div class="ed-status">
                    <div class="ed-coord">(X: 418 Y: 368)</div>
                    <div class="ed-msg">选择钢筋进行编辑，选择标注进行修改或移动;<i class="grip"></i></div>
                </div>
            </div>
        </section>

        <!-- property strip, mostly hidden behind the editor -->
        <aside class="side">
            <div class="side-top"></div>
            <div class="side-white"></div>
            <div class="side-list">
                <svg viewBox="0 0 10 6"><path d="M1 5l4-4 4 4" fill="none" stroke="#555" stroke-width="1.800"/></svg>
                <div class="side-thumb"></div>
                <svg viewBox="0 0 10 6"><path d="M1 1l4 4 4-4" fill="none" stroke="#555" stroke-width="1.800"/></svg>
            </div>
        </aside>
    </div>

    <!-- status bar -->
    <footer class="statusbar">
        <div class="cell c-empty"></div>
        <div class="cell c-h">层高:<tt>2.8m</tt></div>
        <div class="cell c-b">底标高:<tt>17.55m</tt></div>
        <div class="cell c-z"><tt>0</tt></div>
        <div class="cell c-m">名称在当前层当前构件类型下不允许重名</div>
        <div class="cell c-f"><tt>853.5 FPS</tt></div>
    </footer>

    <!-- windows taskbar -->
    <div class="taskbar">
        <div class="start"><svg viewBox="0 0 16 16"><path d="M0 2.300l6.500-1v6.300H0zM7.500 1.100L16 0v7.600H7.500zM0 8.500h6.500v6.300L0 13.800zM7.500 8.500H16V16l-8.500-1.200z" fill="#fff"/></svg></div>
        <div class="search">
            <i class="cortana"></i>
            <span>在这里输入你要搜索的内容</span>
            <svg viewBox="0 0 12 18"><rect x="3.500" y=".5" width="5" height="11" rx="2.500" fill="none" stroke="#999"/><path d="M1 8c0 6 10 6 10 0M6 14v3M3 17h6" fill="none" stroke="#999"/></svg>
        </div>
        <div class="task-icons">
            <div class="task"><svg viewBox="0 0 20 20"><rect x="5" y="2" width="10" height="16" rx="1" fill="none" stroke="#eee" stroke-width="1.300"/><path d="M2 5v10M18 5v10" stroke="#eee" stroke-width="1.300"/></svg></div>
            <div class="task"><svg viewBox="0 0 24 24"><path d="M11 11C3 12 1 6 4 2c4-2 9 2 7 9zM13 11C12 3 18 0 22 4c2 4-2 9-9 7zM13 13c8-1 10 5 7 9-4 2-9-2-7-9zM11 13c1 8-5 11-9 7-2-4 2-9 9-7z" fill="#e8e8e8"/></svg></div>
            <div class="task"><svg viewBox="0 0 24 24"><path d="M4 13h15c1-8-12-11-15-2-2 8 7 13 14 8M4 8C8 3 18 0 22 1" fill="none" stroke="#e5e5e5" stroke-width="3"/></svg></div>
            <div class="task"><svg viewBox="0 0 24 24"><path d="M12 3a9 9 0 1 0 9 9c0-5-4-7-7-6s-4 6-1 7 4-2 3-3" fill="none" stroke="#cfcfcf" stroke-width="1.700"/></svg></div>
            <div class="task"><svg viewBox="0 0 24 24"><path d="M2 13C3 2 18-1 22 11v3H8c1 5 8 5 12 2v5c-7 3-14 1-15-6 0-3 1-5 3-6-3 0-5 2-6 4zM8 10h8c0-4-8-4-8 0z" fill="#0a84e0"/></svg></div>
            <div class="task"><svg viewBox="0 0 24 24"><path d="M3 14h16c1-9-12-12-15-3-2 8 7 13 15 8" fill="none" stroke="#3da2ec" stroke-width="3.400"/><path d="M2 19C6 7 16 1 22 2c2 3-2 8-4 10" fill="none" stroke="#f5c518" stroke-width="1.800"/></svg></div>
            <div class="task run"><svg viewBox="0 0 24 24"><path d="M2 5h8l2 2h10v14H2z" fill="#f5cf63"/><path d="M2 10h20v11H2z" fill="#ffe49a"/><path d="M7 14h10v7H7z" fill="#3aa0e8"/></svg></div>
            <div class="task run"><svg viewBox="0 0 24 24"><path d="M19 3c-7-3-14 2-15 9-1 6 3 11 8 11 5 0 8-4 8-8 0-3-3-5-6-4-3 1-2 4 0 4-2 3-5 0-4-4 1-5 6-7 9-8z" fill="#1a8df0"/></svg></div>
            <div class="task run"><svg viewBox="0 0 24 24"><rect x="1" y="1" width="22" height="22" rx="2" fill="#f2a93c"/><rect x="5" y="6" width="14" height="14" fill="#f7efd5"/><path d="M7 10h9M7 13h9M7 16h6" stroke="#9b7a3d"/><path d="M14 15L20 3l2 1-6 12z" fill="#d0482c"/></svg></div>
            <div class="task run active"><svg viewBox="0 0 24 24"><rect x="1" y="1" width="22" height="22" rx="3" fill="#0a90f0"/><path d="M12 5v14M12 11H5M12 11h7M7 8c-3 0-3 6 0 6M17 8c3 0 3 6 0 6" stroke="#fff" stroke-width="1.800" fill="none"/></svg></div>
            <div class="task run"><svg viewBox="0 0 24 24"><circle cx="12" cy="12" r="11" fill="#7fc93a"/><circle cx="12" cy="12" r="7.500" fill="#eaf6d8"/><path d="M6 12h12M8 9h8M8 15h8" stroke="#4c9c1e" stroke-width="1.500"/><path d="M17 1l5 2" stroke="#7fc93a" stroke-width="2"/></svg></div>
        </div>
        <div class="tray">
            <span class="tray-link">链接</span>
            <div class="tray-cpu"><div>23%</div><div>CPU使用</div></div>
            <svg class="t-up" viewBox="0 0 12 8"><path d="M1 7l5-5 5 5" fill="none" stroke="#eee" stroke-width="1.200"/></svg>
            <svg class="t-bat" viewBox="0 0 18 14"><path d="M4 0v3M8 0v3" stroke="#eee"/><rect x="2" y="3" width="14" height="10" fill="none" stroke="#eee"/><path d="M3 4h9v8H3z" fill="#eee"/></svg>
            <svg class="t-wifi" viewBox="0 0 16 14"><path d="M1 11a10 10 0 0 1 10-10M4 12a7 7 0 0 1 7-7M7 13a4 4 0 0 1 4-4" fill="none" stroke="#eee"/></svg>
            <svg class="t-vol" viewBox="0 0 16 14"><path d="M1 5h3l4-4v12L4 9H1z" fill="none" stroke="#eee"/><path d="M11 4c1 2 1 4 0 6M13 2c2 3 2 7 0 10" fill="none" stroke="#eee"/></svg>
            <svg class="t-kb" viewBox="0 0 22 14"><rect x=".5" y=".5" width="21" height="13" fill="none" stroke="#eee"/><path d="M3 4h16M3 7h16M6 10h10" stroke="#eee" stroke-dasharray="1.500 1"/></svg>
            <span class="t-lang">英</span>
            <svg class="t-s" viewBox="0 0 16 16"><path d="M1 2l13-1 1 13-13 1z" fill="#e8471a"/><path d="M12 4H6c-2 0-2 3 0 3h4c2 0 2 4 0 4H4" fill="none" stroke="#fff" stroke-width="2"/></svg>
            <div class="clock"><div>15:25</div><div>2018/4/21</div></div>
            <div class="notify">
                <svg viewBox="0 0 16 16"><path d="M1 1h14v11H6l-3 3v-3H1z" fill="#f5f5f5"/><path d="M3 4h10M3 6.500h10M3 9h10" stroke="#222"/></svg>
                <span>1</span>
            </div>
        </div>
    </div>

</body>

</html>
```

FILE: styles.css
```css
* {
    margin: 0;
    padding: 0;
    box-sizing: border-box;
}

html,
body {
    width: 1366px;
    height: 768px;
    overflow: hidden;
}

body {
    font-family: "Noto Sans", "Noto Sans CJK SC", sans-serif;
    font-size: 12px;
    color: #111;
    background-color: #fff;
    display: flex;
    flex-direction: column;
    position: relative;
    line-height: 16px;
}

tt {
    font-family: "DejaVu Sans Mono", monospace;
    font-size: 10px;
}

.sprite {
    position: absolute;
}

.ic {
    width: 16px;
    height: 16px;
    flex: none;
}

.caret {
    width: 7px;
    height: 4px;
    flex: none;
}

.sep {
    width: 1px;
    height: 20px;
    background-color: #b5b5b5;
    flex: none;
}

.chev {
    width: 8px;
    height: 6px;
    flex: none;
    align-self: flex-start;
    margin-top: 5px;
}

.ml-4 { margin-left: 4px; }
.ml-5 { margin-left: 5px; }
.ml-6 { margin-left: 6px; }
.ml-7 { margin-left: 7px; }
.ml-11 { margin-left: 11px; }

/* title bar */
.titlebar {
    height: 23px;
    background-color: #fff;
    display: flex;
    align-items: center;
    padding-left: 2px;
    flex: none;
}

.app-logo {
    width: 16px;
    height: 16px;
    margin-right: 5px;
}

.title-text {
    color: #9a9a9a;
    font-size: 12.550px;
    white-space: nowrap;
}

.win-btns {
    margin-left: auto;
    display: flex;
    align-items: center;
    gap: 30px;
    padding-right: 19px;
}

.win-btns svg {
    width: 10px;
    height: 10px;
    margin-left: 6px;
}

.ime {
    position: absolute;
    left: 703px;
    top: 0;
    display: flex;
    align-items: center;
    height: 28px;
}

.ime-s {
    width: 28px;
    height: 28px;
    position: relative;
    z-index: 1;
}

.ime-box {
    width: 179px;
    height: 26px;
    margin-left: -3px;
    background-color: #fff;
    border: 1px solid #c3d6e8;
    display: flex;
    align-items: center;
    gap: 8px;
    padding-left: 6px;
    color: #1769b8;
    font-size: 15px;
}

.ime-box svg {
    width: 16px;
    height: 16px;
}

.ime-box .ime-shirt,
.ime-box .ime-wrench {
    margin-left: -3px;
}

.ime-dot {
    font-size: 11px;
    width: 13px;
    text-align: center;
}

.score {
    position: absolute;
    left: 1041px;
    top: -29px;
    width: 48px;
    height: 48px;
    border-radius: 50%;
    background-color: #43c85c;
    border: 2px solid #d8d8d8;
    box-shadow: 0 1px 2px rgba(0, 0, 0, 0.4);
    color: #fff;
    font-weight: bold;
    font-size: 11px;
    text-align: center;
    padding-top: 28px;
}

/* menu */
.menubar {
    height: 31px;
    background-color: #f0f0f0;
    display: flex;
    align-items: center;
    padding-left: 7px;
    flex: none;
}

.menu-item {
    margin-right: 11.250px;
    white-space: nowrap;
}

.menu-change {
    display: flex;
    align-items: center;
    gap: 3px;
    width: 149px;
    margin-left: -1px;
}

.menu-change .caret {
    margin: 0 1px 0 3px;
}

.menu-notice {
    width: 188px;
    height: 27px;
    background: linear-gradient(#fbfbfb, #f0f0f0);
    padding: 6px 0 0 28px;
    color: #4b2a00;
}

.menu-user {
    width: 222px;
    height: 27px;
    margin-left: 1px;
    background: linear-gradient(#fbfbfb, #f0f0f0);
    display: flex;
    align-items: center;
    padding-left: 5px;
}

.user-phone {
    margin-left: 4px;
}

.menu-user .caret {
    margin: 0 8px 0 7px;
}

.bell {
    margin-left: 8px;
}

.menubar > .chev {
    margin-left: auto;
    margin-right: 6px;
    margin-top: 6px;
}

/* toolbar */
.toolbar {
    height: 30px;
    background-color: #f0f0f0;
    display: flex;
    padding-bottom: 2px;
    border-bottom: 1px solid #fff;
    flex: none;
}

.band {
    display: flex;
    align-items: center;
    background: linear-gradient(#fafafa, #ececec);
    height: 28px;
    flex: none;
}

.band-file {
    width: 150px;
    padding-left: 4px;
    gap: 7px;
}

.band-file .sep {
    margin: 0 -1px 0 -2px;
}

.band-file .chev {
    margin-left: 10px;
}

.band-main {
    width: 546px;
    margin-left: 3px;
}

.band-main .tool:first-child {
    margin-left: 4px;
}

.band-main .chev {
    margin-left: 39px;
}

.band-view {
    width: 663px;
    margin-left: 4px;
    padding-left: 2px;
}

.band-view .chev {
    margin-left: auto;
    margin-right: 6px;
}

.tool {
    display: flex;
    align-items: center;
    gap: 4px;
    margin-left: 7.300px;
    white-space: nowrap;
}

.tool.off {
    color: #8e8e8e;
}

.tool.off .caret {
    opacity: 0.6;
    margin-left: 1px;
}

.sigma {
    width: 16px;
    text-align: center;
    font-weight: bold;
    font-size: 14px;
}

.view-combo {
    width: 62px;
    height: 23px;
    border: 1px solid #777;
    display: flex;
    align-items: center;
    padding-left: 3px;
    color: #8e8e8e;
    gap: 4px;
    margin-right: -3px;
}

.view-combo i {
    width: 14px;
    height: 13px;
    background-color: #e3e3e3;
    border: 1px solid #ccc;
}

.band-view .sep {
    margin-left: 8px;
}

.band-view .sep-tight {
    margin-left: 2px;
}

.band-view .sep + .tool {
    margin-left: 4px;
}

/* main area */
.workspace {
    height: 624px;
    display: flex;
    flex: none;
    background-color: #f4f4f4;
}

.nav {
    width: 226px;
    margin-right: 6px;
    flex: none;
    display: flex;
    flex-direction: column;
}

.nav-head {
    height: 15px;
    border: 1px solid #a0a0a0;
    display: flex;
    align-items: center;
    line-height: 12px;
    margin-bottom: 2px;
}

.nav-head span {
    margin-right: auto;
}

.nav-head svg {
    width: 9px;
    height: 9px;
}

.nav-head .pin {
    margin-right: 9px;
}

.nav-head .cross {
    margin-right: 3px;
}

.nav-btn {
    height: 22px;
    flex: none;
    background-color: #f0f0f0;
    border: 1px solid #a0a0a0;
    border-top-color: #d8d8d8;
    text-align: center;
    line-height: 20px;
}

.nav-head + .nav-btn {
    margin-top: 1px;
}

.nav-tools {
    height: 27px;
    flex: none;
    display: flex;
    align-items: center;
    gap: 7px;
    padding-left: 7px;
    background: linear-gradient(#fbfbfb, #efefef);
}

.nav-tools svg {
    width: 17px;
    height: 16px;
}

.tree-box {
    height: 488px;
    margin: 0 1px 1px 2px;
    flex: none;
    border: 1px solid #8a8a8a;
    background-color: #fff;
    display: flex;
    overflow: hidden;
}

.tree-list {
    flex: 1;
    padding-top: 1px;
}

.group {
    position: relative;
}

.group::before {
    content: "";
    position: absolute;
    left: 12px;
    top: 0;
    bottom: 0;
    border-left: 1px dotted #555;
}

.group.last::before {
    bottom: auto;
    height: 5px;
}

.nosign::before {
    top: -1px;
}

.leaf,
.folder,
.zd {
    height: 16px;
    display: flex;
    align-items: center;
    position: relative;
    white-space: nowrap;
}

.leaf {
    padding-left: 42px;
}

.leaf::before {
    content: "";
    position: absolute;
    left: 32px;
    top: 8px;
    width: 10px;
    border-top: 1px dotted #555;
}

.leaf::after {
    content: "";
    position: absolute;
    left: 32px;
    top: 0;
    height: 16px;
    border-left: 1px dotted #555;
}

.leaf:last-child::after {
    height: 8px;
}

.ico {
    width: 16px;
    height: 16px;
    margin-right: 5px;
    flex: none;
}

.folder {
    padding-left: 23px;
}

.folder .ico {
    margin-right: 4px;
}

.fold {
    position: absolute;
    left: 7px;
    top: 5px;
    width: 9px;
    height: 6px;
    background-color: #fff;
}

.sel-text {
    background-color: #d0d0d0;
    margin-left: -5px;
    padding-left: 5px;
    padding-right: 1px;
    height: 16px;
}

.ico-new {
    width: 14px;
    height: 14px;
    margin-left: 1px;
}

.new-tag {
    font-family: "Liberation Sans", sans-serif;
    font-size: 9px;
    font-weight: bold;
    line-height: 8px;
    height: 9px;
    background-color: #f6d50a;
    padding: 0 1px;
    margin: -7px 0 0 1px;
    color: #222;
}

.scroll {
    width: 16px;
    margin-right: 1px;
    display: flex;
    flex-direction: column;
    align-items: center;
    background-color: #f0f0f0;
    flex: none;
}

.scroll svg {
    width: 9px;
    height: 6px;
    margin: 6px 0;
    flex: none;
}

.scroll-track {
    flex: 1;
    width: 100%;
    padding-top: 174px;
}

.scroll-thumb {
    height: 100%;
    background-color: #c9c9c9;
}

/* component tree */
.parts {
    width: 184px;
    flex: none;
    display: flex;
    flex-direction: column;
}

.parts-tools {
    height: 32px;
    flex: none;
    display: flex;
    align-items: center;
    padding-left: 3px;
    gap: 4px;
    background-color: #f7f7f7;
    white-space: nowrap;
}

.parts-tools .caret {
    margin-right: 1px;
}

.parts-tools .del {
    margin-right: 1px;
}

.parts-tools span + .ic {
    margin-left: 3px;
}

.ic-n {
    font-family: "Liberation Serif", serif;
    font-size: 6px;
    fill: #111;
}

.parts-search {
    height: 27px;
    flex: none;
    display: flex;
    align-items: center;
    background-color: #f4f4f4;
    padding-left: 1px;
}

.search-input {
    width: 156px;
    height: 24px;
    background-color: #fff;
    border: 1px solid #8a8a8a;
    color: #8a8a8a;
    line-height: 21px;
    padding-left: 3px;
}

.parts-search svg {
    width: 16px;
    height: 16px;
    margin-left: 5px;
}

.parts-tree {
    flex: 1;
    margin-bottom: 3px;
    border: 1px solid #8a8a8a;
    background-color: #fff;
    padding-top: 1px;
}

.folder.root {
    padding-left: 23px;
}

.folder.root .ico {
    margin-right: 5px;
}

.zd-list {
    font-family: "DejaVu Sans Mono", monospace;
    font-size: 10px;
}

.zd {
    padding-left: 44px;
}

.zd::before {
    content: "";
    position: absolute;
    left: 29px;
    top: 8px;
    width: 13px;
    border-top: 1px dotted #555;
}

.zd::after {
    content: "";
    position: absolute;
    left: 29px;
    top: 0;
    height: 16px;
    border-left: 1px dotted #555;
}

.zd.current::after {
    height: 8px;
}

.ico-g {
    width: 11px;
    height: 11px;
    margin-right: 8px;
    flex: none;
}

.zd-sel {
    display: flex;
    align-items: center;
    background-color: #2f68c4;
    height: 16px;
    width: 69px;
    margin-left: -4px;
    padding-left: 4px;
}

/* editor window */
.editor {
    width: 926px;
    margin-left: 2px;
    flex: none;
    height: 618px;
    display: flex;
    flex-direction: column;
    background-color: #b6cfe7;
    border-right: 1px solid #1a1a1a;
}

.editor-title {
    height: 28px;
    flex: none;
    background: linear-gradient(#9ab4d1, #b2cce6);
    padding: 10px 0 0 8px;
    line-height: 16px;
}

.editor-body {
    flex: 1;
    margin: 1px 6px 8px 7px;
    display: flex;
    flex-direction: column;
    background-color: #f0f0f0;
    min-height: 0;
}

.tabs {
    height: 21px;
    flex: none;
    display: flex;
    align-items: flex-end;
    padding-left: 4px;
    border-bottom: 1px solid #d0d0d0;
}

.tab {
    width: 40px;
    height: 18px;
    padding-left: 6px;
    border: 1px solid #d0d0d0;
    border-bottom: 0;
    line-height: 19px;
}

.tab.active {
    width: 44px;
    height: 21px;
    padding-left: 7px;
    background-color: #fff;
    line-height: 20px;
}

.tab-page {
    flex: 1;
    margin: 2px 1px 3px 2px;
    border: 1px solid #fff;
    border-top: 0;
    padding: 2px 0 0 4px;
    display: flex;
    flex-direction: column;
    min-height: 0;
}

.ed-row {
    height: 28px;
    flex: none;
    display: flex;
    align-items: center;
}

.ed-band {
    display: flex;
    align-items: center;
    height: 24px;
    background-color: #f7f7f7;
    margin-left: -1px;
    padding: 0 4px 0 6px;
}

.ed-band.second {
    padding-right: 8px;
}

.ed-t {
    white-space: nowrap;
}

.ed-t.off {
    color: #8e8e8e;
    margin-left: 8px;
}

.ed-ic {
    display: inline-flex;
    align-items: center;
    gap: 5px;
}

.ed-band .ed-ic {
    gap: 4px;
}

.ed-band .ml-11 {
    gap: 5px;
}

.sep-a {
    margin-left: 8px;
}

.sep-b {
    margin-left: 4px;
}

.sep-c {
    margin-left: 6px;
}

.rebar-input {
    width: 49px;
    height: 22px;
    margin-left: 3px;
    background-color: #fff;
    display: flex;
    align-items: center;
    justify-content: space-between;
    padding: 0 3.500px 0 2px;
    letter-spacing: .5px;
}

.ed-btn {
    display: flex;
    align-items: center;
    justify-content: center;
    border: 1px solid transparent;
    white-space: nowrap;
    height: 24px;
}

.ed-btn.on {
    background-color: #dfeaf5;
    border-color: #2a8ad8;
}

.select-btn {
    width: 50px;
    margin-left: 3px;
    gap: 2px;
}

.rebar-type {
    margin-left: 2px;
    white-space: nowrap;
}

.second .ed-btn {
    width: 33px;
    height: 23px;
}

.cad {
    width: 901px;
    height: 445px;
    display: block;
    flex: none;
    margin-left: -1px;
    outline: 2px solid #f00;
    outline-offset: -2px;
}

.guide path,
.guide {
    fill: none;
    stroke: #3a3f4a;
    stroke-width: 1;
}

.guide-dash path {
    fill: none;
    stroke: #000;
    stroke-dasharray: 9 22 3 30;
}

.ray {
    fill: none;
    stroke: #8d8d8d;
    stroke-dasharray: 3 2;
}

.ref-dash path {
    fill: none;
    stroke: #b6d3f5;
    stroke-dasharray: 4 3;
}

.outline {
    fill: none;
    stroke: #eaeaea;
    stroke-width: 2;
}

.stirrup {
    fill: none;
    stroke: #f0f0f0;
}

.bar {
    fill: none;
    stroke: #c9181e;
    stroke-width: 4;
}

.node circle {
    fill: #13171f;
    stroke: #f4d91c;
    stroke-width: 1.200;
}

.dim path {
    fill: none;
    stroke: #66b84f;
}

.ghost-label text,
.dim-label text {
    font-family: "Liberation Sans", sans-serif;
    font-size: 11px;
}

.ghost-label text {
    fill: #3a3f4a;
}

.dim-label text {
    fill: #f2f2f2;
}

.axis-label text {
    font-family: "Liberation Mono", monospace;
    font-size: 9px;
    font-weight: bold;
    fill: #12e02a;
}

.snap-row {
    display: flex;
    align-items: center;
    height: 25px;
    flex: none;
    margin-top: 2px;
}

.snap {
    width: 51px;
    height: 23px;
    gap: 4px;
}

.snap.wide {
    width: 76px;
    margin-left: -1px;
}

.snap-band {
    display: flex;
    align-items: center;
    gap: 6px;
    height: 24px;
    margin-left: 4px;
    padding: 0 4px 0 2px;
    background-color: #f7f7f7;
}

.ed-status {
    height: 22px;
    flex: none;
    margin: 0 1px 5px 1px;
    display: flex;
    gap: 2px;
}

.ed-coord,
.ed-msg {
    background: linear-gradient(#fbfbfb, #f2f2f2);
    border: 1px solid #e2e2e2;
    border-bottom-color: #cfcfcf;
    line-height: 20px;
    padding-left: 4px;
}

.ed-coord {
    width: 98px;
    font-size: 11px;
}

.ed-msg {
    flex: 1;
    position: relative;
    padding-left: 1px;
}

.grip {
    position: absolute;
    right: 2px;
    bottom: 2px;
    width: 9px;
    height: 9px;
    background: repeating-linear-gradient(135deg, #bbb 0 2px, transparent 2px 4px);
}

/* side strip */
.side {
    flex: 1;
    display: flex;
    flex-direction: column;
}

.side-top {
    height: 28px;
    margin-right: 2px;
    background-color: #f6f6f6;
}

.side-white {
    height: 24px;
    background-color: #fff;
    margin-right: 2px;
}

.side-list {
    height: 563px;
    margin-right: 5px;
    border: 1px solid #a8a8a8;
    background-color: #f0f0f0;
    display: flex;
    flex-direction: column;
    align-items: center;
}

.side-list svg {
    width: 9px;
    height: 6px;
    margin: 7px 0 6px;
    flex: none;
}

.side-thumb {
    flex: 1;
    width: 100%;
    background-color: #cacaca;
}

/* status bar */
.statusbar {
    height: 20px;
    flex: none;
    display: flex;
    gap: 2px;
    background-color: #fff;
}

.cell {
    background: linear-gradient(#fbfbfb, #f0f0f0);
    border: 1px solid #e0e0e0;
    line-height: 19px;
    padding-left: 1px;
    white-space: nowrap;
}

.c-empty { width: 148px; }
.c-h { width: 78px; }
.c-b { width: 96px; margin-left: 1px; }
.c-z { width: 47px; margin-left: 1px; }
.c-m { width: 915px; margin-left: 1px; }
.c-f { flex: 1; margin-left: -1px; }

/* windows taskbar */
.taskbar {
    height: 40px;
    flex: none;
    display: flex;
    align-items: center;
    background-color: #0b1218;
    color: #e8e8e8;
}

.start {
    width: 48px;
    height: 40px;
    background-color: #000;
    display: flex;
    align-items: center;
    justify-content: center;
}

.start svg {
    width: 16px;
    height: 16px;
}

.search {
    width: 344px;
    height: 40px;
    background-color: #333;
    display: flex;
    align-items: center;
    padding-left: 10px;
    color: #989898;
    font-size: 14px;
    flex: none;
}

.cortana {
    width: 20px;
    height: 20px;
    border: 3px solid #ddd;
    border-radius: 50%;
    margin-right: 6px;
    flex: none;
}

.search svg {
    width: 12px;
    height: 18px;
    margin-left: auto;
    margin-right: 15px;
}

.task-icons {
    display: flex;
    margin-left: -1px;
}

.task {
    width: 49.700px;
    height: 40px;
    display: flex;
    align-items: center;
    justify-content: center;
    flex: none;
    position: relative;
}

.task svg {
    width: 22px;
    height: 22px;
}

.task.run::after {
    content: "";
    position: absolute;
    left: 5px;
    right: 5px;
    bottom: 0;
    height: 2px;
    background-color: #76b9ed;
}

.task.active {
    background-color: #2c3740;
}

.task.active::after {
    left: 1px;
    right: 1px;
}

.tray {
    flex: 1;
    display: flex;
    align-items: center;
    height: 40px;
    padding-left: 12px;
}

.tray-link {
    width: 38px;
}

.tray-cpu,
.clock {
    text-align: center;
    line-height: 18px;
}

.tray-cpu {
    width: 50px;
    margin-left: 5px;
}

.tray svg {
    flex: none;
}

.t-up { width: 11px; height: 8px; margin-left: 18px; }
.t-bat { width: 16px; height: 13px; margin-left: 10px; }
.t-wifi { width: 14px; height: 13px; margin-left: 11px; }
.t-vol { width: 15px; height: 13px; margin-left: 5px; }
.t-kb { width: 23px; height: 14px; margin-left: 10px; }
.t-lang { margin-left: 11px; font-size: 13px; }
.t-s { width: 16px; height: 16px; margin-left: 13px; }

.clock {
    width: 60px;
    margin-left: 19px;
}

.notify {
    position: relative;
    margin-left: 16px;
    width: 20px;
    height: 22px;
}

.notify svg {
    width: 16px;
    height: 16px;
}

.notify span {
    position: absolute;
    right: -1px;
    bottom: -4px;
    width: 15px;
    height: 15px;
    border-radius: 50%;
    background-color: #333;
    border: 1px solid #ddd;
    font-size: 11px;
    line-height: 13px;
    text-align: center;
    font-weight: bold;
}
```
